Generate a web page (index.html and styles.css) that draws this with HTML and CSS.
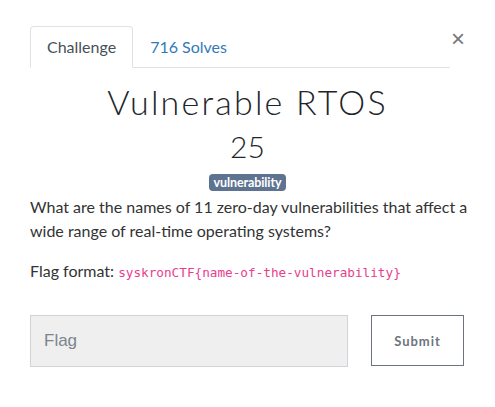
FILE: index.html
```html
<!DOCTYPE html>
<html>
<head>
<meta charset="utf-8">
<link rel="stylesheet" href="styles.css">
</head>
<body>
<div class="modal">
  <div class="top">
    <ul class="tabs">
      <li class="tab active">Challenge</li>
      <li class="tab link">716 Solves</li>
    </ul>
    <span class="close">&times;</span>
  </div>
  <h2 class="title">Vulnerable RTOS</h2>
  <h3 class="value">25</h3>
  <div class="tags"><span class="badge">vulnerability</span></div>
  <p class="desc">What are the names of 11 zero-day vulnerabilities that affect a wide range of real-time operating systems?</p>
  <p class="desc">Flag format: <code class="code">syskronCTF{name-of-the-vulnerability}</code></p>
  <div class="form">
    <input class="flag" type="text" placeholder="Flag">
    <button class="submit">Submit</button>
  </div>
</div>
</body>
</html>
```
FILE: styles.css
```css
html, body { margin: 0; padding: 0; background: #fff; }
body { font-family: Lato, "Noto Sans", sans-serif; color: #212529; font-size: 16px; line-height: 24px; }
.modal { padding: 26px 25px 0 30px; width: 440px; }
.top { display: flex; align-items: flex-start; width: 435px; }
.tabs { list-style: none; margin: 0; padding: 0; display: flex; width: 420px; border-bottom: 1px solid #dee2e6; }
.tab { padding: 8px 16px 8px 16px; margin-bottom: -1px; border: 1px solid transparent; border-top-left-radius: 4px; border-top-right-radius: 4px; }
.tab.active { color: #495057; border-color: #dee2e6 #dee2e6 #fff; background: #fff; }
.tab.link { color: #337ab7; }
.close { margin-left: auto; margin-top: 1px; font-family: "Liberation Sans", Arial, sans-serif; font-size: 24px; font-weight: 400; color: #777; line-height: 24px; }
.title { width: 435px; margin: 14px 0 0 0; text-align: center; font-family: Lato, sans-serif; font-weight: 300; font-size: 34px; line-height: 40px; letter-spacing: 2.2px; color: #212529; }
.value { width: 435px; margin: 6px 0 0 0; text-align: center; font-weight: 300; font-size: 30px; line-height: 36px; color: #212529; }
.tags { width: 435px; text-align: center; margin-top: 8px; line-height: 17px; height: 17px; }
.badge { display: inline-block; background: #5d7390; color: #fff; font-size: 12.5px; font-weight: 700; line-height: 17px; padding: 0 5px; border-radius: 4px; letter-spacing: -0.1px; }
.desc { margin: 6px 0 16px 0; color: #333; }
.desc + .desc { margin-top: 0; }
.code { font-family: "DejaVu Sans Mono", "Liberation Mono", monospace; font-size: 12.7px; color: #e83e8c; }
.form { display: flex; margin-top: 30px; }
.flag { box-sizing: border-box; width: 318px; height: 52px; background: #efefef; border: 1px solid #ced4da; padding: 0 13px; font-family: "Liberation Sans", Arial, sans-serif; font-size: 17px; color: #495057; outline: none; }
.flag::placeholder { color: #7b858e; }
.submit { box-sizing: border-box; margin-left: 23px; width: 93px; height: 51px; background: #fff; border: 1px solid #6c757d; color: #6c757d; font-family: Lato, sans-serif; font-weight: 700; font-size: 13px; letter-spacing: 1px; }
```
